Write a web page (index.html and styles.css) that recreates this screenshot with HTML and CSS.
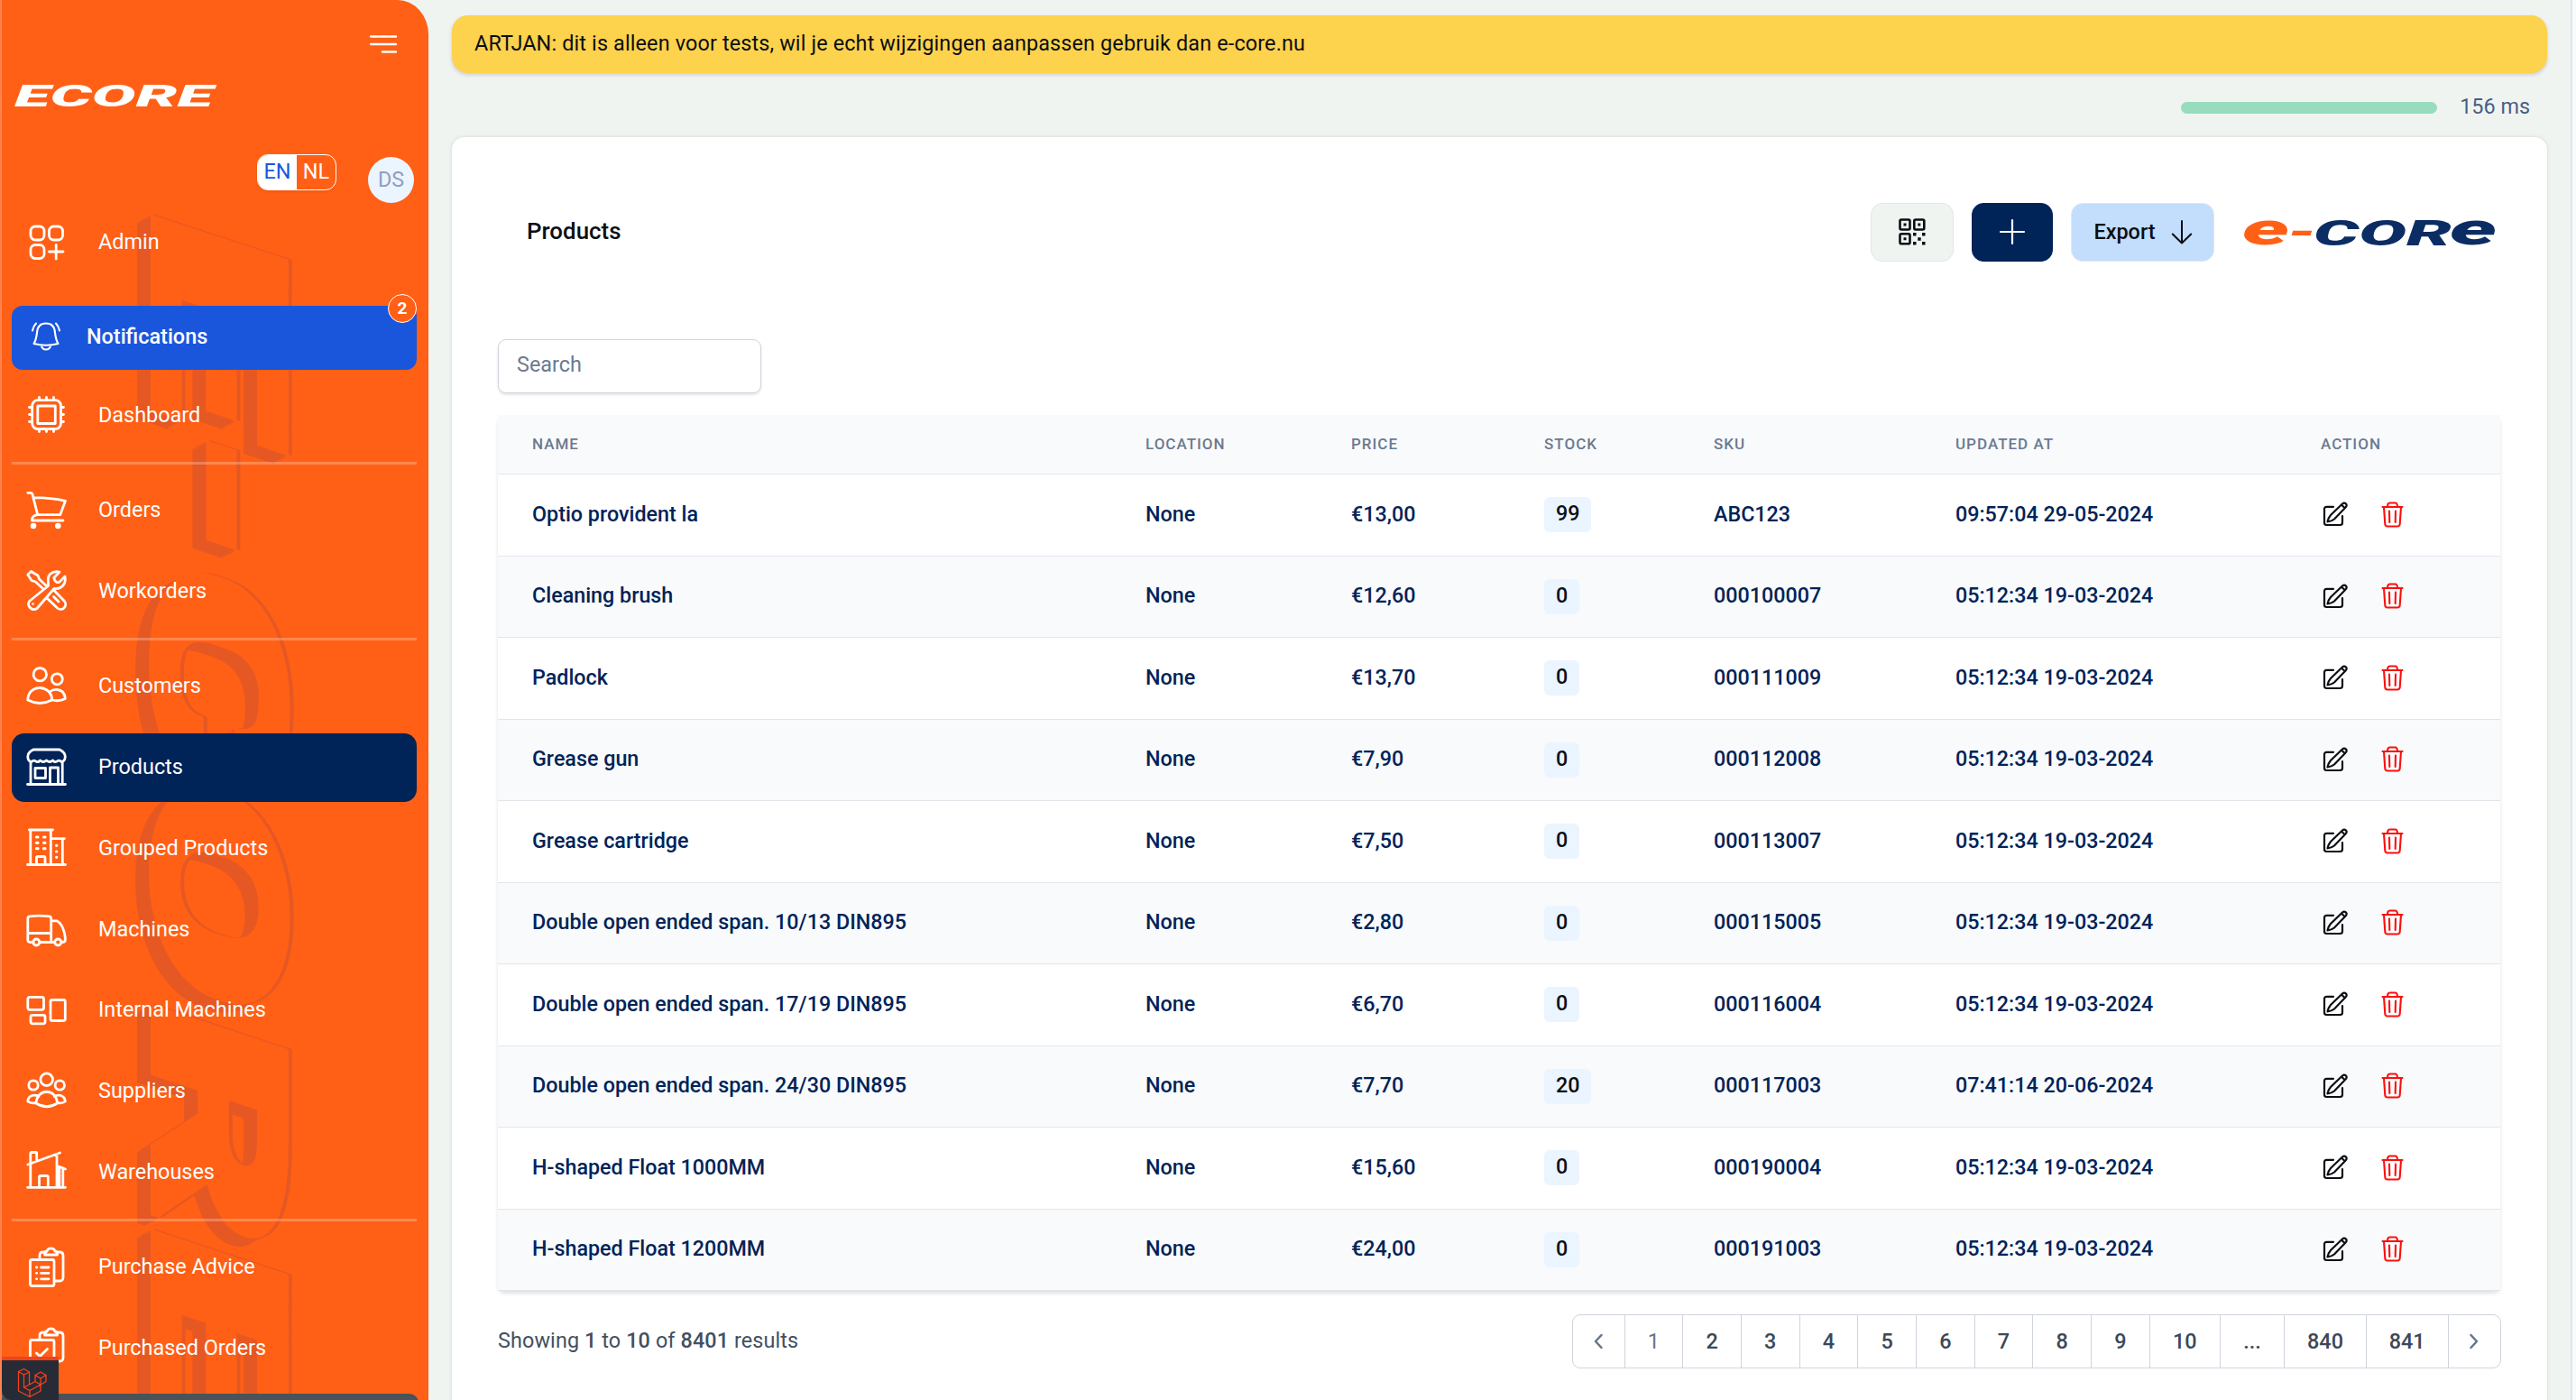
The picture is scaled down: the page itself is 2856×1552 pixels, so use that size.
FILE: index.html
```html
<!DOCTYPE html>
<html lang="en">
<head>
    <meta charset="UTF-8">
    <meta name="viewport" content="width=device-width, initial-scale=1.0">
    <title>Products</title>
    <link rel="stylesheet" href="styles.css">
</head>
<body>

<!-- Shared icons -->
<svg class="sprite" width="0" height="0">
    <symbol id="icon-edit" viewBox="0 0 28 28">
        <path d="M12 5.8H4.5Q2 5.8 2 8.300V23.500Q2 26 4.500 26H19.500Q22 26 22 23.500V16"/>
        <path d="M5.500 22.500Q6 18.500 9 15L22 2.500Q24 .8 26 2.500Q27.500 4.500 25.500 6.500L13 19.500Q10 22 5.500 22.500ZM21 3.500L24.500 7"/>
    </symbol>
    <symbol id="icon-trash" viewBox="0 0 25 29">
        <path d="M1.500 6H23.500M7 6Q7 1.500 9.500 1.500H15.500Q18 1.500 18 6M3 6L4.300 25Q4.500 27.500 7 27.500H18Q20.500 27.500 20.700 25L22 6M9 10.500L9.300 23M16 10.500L15.700 23"/>
    </symbol>
</svg>

<div class="page">
    <aside class="sidebar">
        <svg class="watermark" width="475" height="1600" viewBox="0 0 475 1600">
            <defs>
                <g id="mark">
                    <text transform="matrix(0 1 -1 -.33 173 236)" x="-10" textLength="228" lengthAdjust="spacingAndGlyphs">E</text>
                    <text transform="matrix(0 1 -1 -.33 185 465)" textLength="130" lengthAdjust="spacingAndGlyphs">-</text>
                    <text transform="matrix(0 1 -1 -.33 173 618)" x="-6" textLength="242" lengthAdjust="spacingAndGlyphs">C</text>
                    <text transform="matrix(0 1 -1 -.33 173 854)" x="-6" textLength="242" lengthAdjust="spacingAndGlyphs">O</text>
                    <text transform="matrix(0 1 -1 -.33 173 1112)" x="-10" textLength="244" lengthAdjust="spacingAndGlyphs">R</text>
                    <text transform="matrix(0 1 -1 -.33 173 1361)" x="-10" textLength="228" lengthAdjust="spacingAndGlyphs">E</text>
                </g>
            </defs>
            <g class="mark-side">
                <use href="#mark" x="4"/>
                <use href="#mark" x="-3" y="2"/>
                <use href="#mark" x="-6" y="4"/>
                <use href="#mark" x="-9" y="5"/>
                <use href="#mark" x="-12" y="7"/>
                <use href="#mark" x="-15" y="9"/>
            </g>
            <use class="mark-face" href="#mark"/>
        </svg>

        <div class="menu-toggle">
            <svg width="30" height="20" viewBox="0 0 30 20"><path d="M1 1.500H29M1 10H29M14 18.500H29"/></svg>
        </div>
        <svg class="brand" width="224" height="28" viewBox="0 0 224 28">
            <text x="0" y="25" textLength="220" lengthAdjust="spacingAndGlyphs">ECORE</text>
        </svg>
        <div class="user-bar">
            <div class="lang"><span class="active">EN</span><span>NL</span></div>
            <div class="avatar">DS</div>
        </div>

        <nav class="nav">
            <a class="nav-item">
                <svg viewBox="0 0 45 45"><rect x="5" y="5" width="15" height="15" rx="5"/><rect x="25.500" y="5" width="15" height="15" rx="5"/><rect x="5" y="25.500" width="15" height="15" rx="5"/><path d="M25.500 33H41M33.200 25.500V41"/></svg>
                Admin
            </a>
            <a class="nav-item notifications">
                <svg viewBox="0 0 34 36"><path d="M3.500 26Q6 22 7 14Q7.500 3.500 17 3.500Q26.500 3.500 27 14Q28 22 30.500 26Q17 29.500 3.500 26ZM12 28.500Q13 32.500 17 32.500Q21 32.500 22 28.500M2 11.500Q3 6.500 6 3.500M32 11.500Q31 6.500 28 3.500"/></svg>
                Notifications
                <span class="count">2</span>
            </a>
            <a class="nav-item">
                <svg viewBox="0 0 45 45"><rect x="6.700" y="6.700" width="31.800" height="31.800" rx="6"/><rect x="12.800" y="13" width="19.500" height="19.500"/><path d="M14.500 3.500V6M22.500 3.500V6M30.500 3.500V6M14.500 39V41.500M22.500 39V41.500M30.500 39V41.500M3.500 14.500H6M3.500 22.500H6M3.500 30.500H6M39 14.500H41.500M39 22.500H41.500M39 30.500H41.500"/></svg>
                Dashboard
            </a>
            <hr>
            <a class="nav-item">
                <svg viewBox="0 0 45 45"><path d="M1.800 3.300H5.200Q6.500 3.300 7 5L12.700 27.700H37.700L43.500 12.300Q28 8.700 8.500 8.700M12.700 27.700Q6.500 28.500 6.300 34H41"/><circle class="fill" cx="8" cy="40" r="3.300"/><circle class="fill" cx="35.300" cy="40" r="3.300"/></svg>
                Orders
            </a>
            <a class="nav-item">
                <svg viewBox="0 0 45 45"><path d="M22.500 17.500L14.500 10L13 6L5.500 1.500L1.800 5L6 11.500L10.500 13L18.500 20.500M24.500 17.500L3.500 34.500A6 6 0 0 0 12 42.500L31 20.500Q39 21.500 42.500 14.500Q44 11 43 7L36.500 13.500Q32 14.500 30.800 8.500L37 2Q31 .5 26.500 4.500Q23.500 8 24.500 14ZM22.500 30.500L34.500 42A5.500 5.500 0 0 0 42.500 34.500L30.500 22M30.500 29.500L36 35"/><circle class="fill" cx="7.500" cy="37.500" r="1.200"/></svg>
                Workorders
            </a>
            <hr>
            <a class="nav-item">
                <svg viewBox="0 0 45 45"><circle cx="15.300" cy="9.700" r="7.200"/><circle cx="34.300" cy="14.800" r="6"/><path d="M1.800 38C2 20 28 20 28.700 38Q15 45 1.800 38ZM26 29Q30 26 34.300 26.500Q42.500 27 43.300 36.500Q37 40 28.500 38"/></svg>
                Customers
            </a>
            <a class="nav-item active">
                <svg viewBox="0 0 45 45"><path d="M8 3H37Q43.300 6 43.300 11Q43 16 39 16.500Q37 14.500 35 15.500Q32 18 29.500 15Q26 18 22.500 15Q19 18 15.500 15Q13 18 10 15.500Q8 14.500 6 16.500Q2 16 1.800 11Q1.700 6 8 3ZM5 17V41.500M40.200 17V41.500M1.500 41.500H43.500M10 23.500H21.500V34.500H10ZM26.500 41V23H35.500V41"/></svg>
                Products
            </a>
            <a class="nav-item">
                <svg viewBox="0 0 45 45"><path d="M3.500 3H29.500M4.800 3V41.500M27.300 3V41.500M1.500 41.500H43.500M28 12.700H42.500M40.300 13V41.500M11.500 41V34Q11.500 32.500 13 32.500H19.500Q21 32.500 21 34V41"/><path class="dots" d="M11.500 11H13M19.500 11H21M11.500 17.300H13M19.500 17.300H21M11.500 23.700H13M19.500 23.700H21M33.600 20.300H33.800M33.600 27H33.800M33.600 33.300H33.800"/></svg>
                Grouped Products
            </a>
            <a class="nav-item">
                <svg viewBox="0 0 45 45"><path d="M8 37.500H4Q1.800 37.500 1.800 35V11.500Q1.800 9 4 8.800Q14 7.500 25.500 8.800Q27.700 9 27.700 11.500V37.500H15M2 27.500H27.500M28 13.800H34Q41 17 43.300 32V35.500Q43 37.500 39.500 37.500M27.700 37.500H31.500"/><circle cx="11.300" cy="37.500" r="3.500"/><circle cx="35.300" cy="37.500" r="3.500"/></svg>
                Machines
            </a>
            <a class="nav-item">
                <svg viewBox="0 0 45 45"><rect x="1.800" y="8.300" width="17.700" height="14" rx="2"/><rect x="5" y="28.300" width="16" height="9.500" rx="2"/><rect x="27" y="11.500" width="16.300" height="23" rx="2"/></svg>
                Internal Machines
            </a>
            <a class="nav-item">
                <svg viewBox="0 0 45 45"><circle cx="22.700" cy="10.700" r="6.800"/><circle cx="8" cy="17" r="5.200"/><circle cx="37.300" cy="17" r="5.200"/><path d="M11 37C12 20 33.500 20 34.500 37Q22.700 44.500 11 37ZM14 29.500Q10 27.500 6.500 28.500Q2 30 1.800 35Q5 37.500 11 36.500M31.300 29.500Q35 27.500 38.500 28.500Q43 30 43.300 35Q40 37.500 34.500 36.500"/></svg>
                Suppliers
            </a>
            <a class="nav-item">
                <svg viewBox="0 0 45 45"><path d="M1.800 15L37.500 2M4.800 14V2.500Q4.800 1.500 6 1.500H10.500Q11.700 1.500 11.700 2.500V11M4.800 14V40.300M1.500 40.300H43.500M34 3.500V40M14.500 40V29Q14.500 27.500 16 27.500H22.800Q24.300 27.500 24.300 29V40M34.300 16.500L43.500 20M36.800 18V40M40.800 19V40"/></svg>
                Warehouses
            </a>
            <hr>
            <a class="nav-item">
                <svg viewBox="0 0 45 45"><rect x="4.500" y="14.500" width="26.500" height="29" rx="2"/><path d="M15 14V10Q15 6 19 6H22M34 6H37Q41 6 41 10V34Q41 38 37 38H32M20.500 9Q20 5.500 23 5Q24 1.800 27.500 1.800Q31 1.800 32 5Q35 5.500 34.500 9ZM16.500 23H25M16.500 29.300H25M16.500 35.800H25M11.500 23H11.700M11.500 29.300H11.700M11.500 35.800H11.700"/></svg>
                Purchase Advice
            </a>
            <a class="nav-item">
                <svg viewBox="0 0 45 45"><rect x="4.500" y="14.500" width="26.500" height="29" rx="2"/><path d="M15 14V10Q15 6 19 6H22M34 6H37Q41 6 41 10V34Q41 38 37 38H32M20.500 9Q20 5.500 23 5Q24 1.800 27.500 1.800Q31 1.800 32 5Q35 5.500 34.500 9ZM11.500 29L15.300 32.500L23.500 24.500"/></svg>
                Purchased Orders
            </a>
        </nav>

        <div class="status-bar"></div>
        <div class="debug-toggle">
            <svg width="34" height="34" viewBox="0 0 34 34"><path d="M1.500 4.500L7.500 1.500L13.500 5V19L20 15.500V8.500L26 5L32 8.500V15.500L26 19V26L14 32.500L1.500 26ZM1.500 4.500L7.500 8L13.500 5M7.500 8V22L14 25.500L26 19L20 15.500L7.500 22M14 25.500V32.500M20 8.500L26 12L32 8.500M26 12V19"/></svg>
        </div>
    </aside>

    <main class="content">
        <div class="banner">ARTJAN: dit is alleen voor tests, wil je echt wijzigingen aanpassen gebruik dan e-core.nu</div>
        <div class="timing">
            <div class="timing-bar"></div>
            <span>156 ms</span>
        </div>

        <section class="card">
            <div class="card-header">
                <h1>Products</h1>
                <div class="actions">
                    <button class="btn btn-qr">
                        <svg width="30" height="30" viewBox="0 0 30 30"><rect x="1.500" y="1.500" width="11" height="11" rx="1.500"/><rect x="17.300" y="1.500" width="11" height="11" rx="1.500"/><rect x="1.500" y="17.300" width="11" height="11" rx="1.500"/><path class="dot" d="M5.500 5.500h3v3h-3zM21.300 5.500h3v3h-3zM5.500 21.300h3v3h-3zM16 16h3.500v3.500H16zM26 16h3.500v3.500H26zM21.200 21.200h3.500v3.500h-3.500zM16 26h3.500v3.500H16zM26 26h3.500v3.500H26z"/></svg>
                    </button>
                    <button class="btn btn-add">
                        <svg width="28" height="28" viewBox="0 0 28 28"><path d="M14 1V27M1 14H27"/></svg>
                    </button>
                    <button class="btn btn-export">
                        Export
                        <svg width="22" height="27" viewBox="0 0 22 27"><path d="M11 1V25.500M.8 15.500L11 25.500L21.200 15.500"/></svg>
                    </button>
                    <svg class="logo" width="286" height="50" viewBox="0 -10 286 50">
                        <text class="logo-e" x="-1" y="29" textLength="52" lengthAdjust="spacingAndGlyphs">e</text>
                        <text class="logo-dash" x="49" y="29" textLength="32" lengthAdjust="spacingAndGlyphs">-</text>
                        <text class="logo-core" x="78" y="30" textLength="153" lengthAdjust="spacingAndGlyphs">COR</text>
                        <text class="logo-core small" x="229" y="29" textLength="52" lengthAdjust="spacingAndGlyphs">e</text>
                    </svg>
                </div>
            </div>

            <input class="search" type="text" placeholder="Search">

            <table class="products">
                <colgroup>
                    <col style="width: 680px"><col style="width: 228px"><col style="width: 214px"><col style="width: 188px"><col style="width: 268px"><col style="width: 405px"><col>
                </colgroup>
                <thead>
                    <tr><th>Name</th><th>Location</th><th>Price</th><th>Stock</th><th>SKU</th><th>Updated at</th><th>Action</th></tr>
                </thead>
                <tbody id="product-rows"></tbody>
            </table>

            <div class="table-footer">
                <p>Showing <b>1</b> to <b>10</b> of <b>8401</b> results</p>
                <div class="pagination">
                    <span class="arrow"><svg width="12" height="18" viewBox="0 0 12 18"><path d="M9.500 2L3 9L9.500 16"/></svg></span>
                    <span class="current">1</span>
                    <span>2</span>
                    <span>3</span>
                    <span>4</span>
                    <span>5</span>
                    <span>6</span>
                    <span>7</span>
                    <span>8</span>
                    <span>9</span>
                    <span class="ten">10</span>
                    <span class="dots">...</span>
                    <span class="wide">840</span>
                    <span class="wide">841</span>
                    <span class="arrow"><svg width="12" height="18" viewBox="0 0 12 18"><path d="M2.500 2L9 9L2.500 16"/></svg></span>
                </div>
            </div>
        </section>
    </main>
    <div class="page-edge"></div>
</div>

<script src="script.js"></script>
</body>
</html>
```

FILE: script.js
```js
const products = [
    ['Optio provident la', '€13,00', 99, 'ABC123', '09:57:04 29-05-2024'],
    ['Cleaning brush', '€12,60', 0, '000100007', '05:12:34 19-03-2024'],
    ['Padlock', '€13,70', 0, '000111009', '05:12:34 19-03-2024'],
    ['Grease gun', '€7,90', 0, '000112008', '05:12:34 19-03-2024'],
    ['Grease cartridge', '€7,50', 0, '000113007', '05:12:34 19-03-2024'],
    ['Double open ended span. 10/13 DIN895', '€2,80', 0, '000115005', '05:12:34 19-03-2024'],
    ['Double open ended span. 17/19 DIN895', '€6,70', 0, '000116004', '05:12:34 19-03-2024'],
    ['Double open ended span. 24/30 DIN895', '€7,70', 20, '000117003', '07:41:14 20-06-2024'],
    ['H-shaped Float 1000MM', '€15,60', 0, '000190004', '05:12:34 19-03-2024'],
    ['H-shaped Float 1200MM', '€24,00', 0, '000191003', '05:12:34 19-03-2024']
];

document.getElementById('product-rows').innerHTML = products.map(([name, price, stock, sku, updated]) => `
    <tr>
        <td>${name}</td>
        <td>None</td>
        <td>${price}</td>
        <td><span class="stock">${stock}</span></td>
        <td>${sku}</td>
        <td>${updated}</td>
        <td>
            <div class="row-actions">
                <svg class="edit" width="28" height="28"><use href="#icon-edit"/></svg>
                <svg class="trash" width="25" height="29"><use href="#icon-trash"/></svg>
            </div>
        </td>
    </tr>`).join('');
```

FILE: styles.css
```css
* {
    box-sizing: border-box;
}

body {
    margin: 0;
    font-family: Roboto, "Liberation Sans", sans-serif;
    font-size: 23.4px;
    background-color: #f0f4f1;
    overflow: hidden;
}

svg {
    fill: none;
    stroke: currentColor;
    stroke-linecap: round;
    stroke-linejoin: round;
    flex-shrink: 0;
    overflow: visible;
}

svg text {
    stroke: none;
}

.sprite {
    position: absolute;
}

.page {
    display: flex;
    height: 1552px;
}

/* Sidebar */
.sidebar {
    position: relative;
    width: 475px;
    height: 1552px;
    flex-shrink: 0;
    padding: 39px 13px 0 11px;
    border-left: 2px solid #ff8450;
    border-top-right-radius: 34px 38px;
    background-color: #ff6016;
    color: #fff;
    overflow: hidden;
}

.watermark {
    position: absolute;
    top: 0;
    left: -2px;
}

.watermark text {
    font-family: Roboto, "Liberation Sans", sans-serif;
    font-size: 198px;
    font-weight: 700;
    stroke: inherit;
    stroke-width: 12px;
    stroke-linejoin: miter;
}

.mark-side {
    fill: #e55823;
    stroke: #e55823;
}

.mark-face {
    fill: #ff6016;
    stroke: #ff6016;
}

.menu-toggle {
    display: flex;
    justify-content: flex-end;
    height: 20px;
    padding-right: 22px;
}

.menu-toggle svg {
    stroke-width: 2.5;
}

.brand {
    display: block;
    margin: 34px 0 0 3px;
}

.brand text {
    fill: #fff;
    font: italic 900 33.5px Roboto, sans-serif;
}

.user-bar {
    display: flex;
    justify-content: flex-end;
    gap: 35px;
    margin-top: 50px;
    padding-right: 3px;
    height: 59.5px;
}

.lang {
    display: flex;
    width: 88px;
    height: 40px;
    border: 1px solid #fff;
    border-radius: 12px;
    overflow: hidden;
    line-height: 37px;
    box-shadow: 0 2px 3px rgba(0, 0, 0, 0.06);
}

.lang span {
    flex: 1;
    text-align: center;
}

.lang .active {
    background-color: #fff;
    color: #1a56db;
}

.avatar {
    width: 51px;
    height: 51px;
    margin-top: 3px;
    border-radius: 50%;
    background-color: #ebf5ff;
    color: #8f9fbc;
    line-height: 51px;
    text-align: center;
}

.nav {
    position: relative;
}

.nav-item {
    display: flex;
    align-items: center;
    gap: 35px;
    height: 76px;
    margin-bottom: 13.7px;
    padding: 0 0 1px 16px;
    border-radius: 14px;
}

.nav-item svg {
    width: 45px;
    height: 45px;
    stroke-width: 2.8;
}

.nav-item .fill {
    fill: currentColor;
    stroke: none;
}

.nav-item .dots {
    stroke-width: 3.2;
}

.nav-item.active {
    background-color: #002358;
}

.nav-item.notifications {
    position: relative;
    height: 71px;
    margin: 32px 0 12.800px;
    padding-left: 21px;
    padding-bottom: 2px;
    gap: 28px;
    border-radius: 12px;
    background-color: #1a56db;
    font-weight: 500;
}

.notifications svg {
    width: 34px;
    height: 36px;
    stroke-width: 2.1;
}

.count {
    position: absolute;
    top: -13px;
    right: 0;
    width: 32px;
    height: 32px;
    border: 1.5px solid #fff;
    border-radius: 50%;
    background-color: #ff6016;
    font-size: 19px;
    font-weight: 700;
    line-height: 30px;
    text-align: center;
}

.nav hr {
    height: 3px;
    margin: 0 0 12.800px;
    border: none;
    background-color: rgba(255, 255, 255, 0.25);
}

.status-bar {
    position: absolute;
    left: -2px;
    top: 1545px;
    width: 464px;
    height: 20px;
    border-radius: 12px;
    background-color: #4b5258;
}

.debug-toggle {
    position: absolute;
    left: -2px;
    top: 1504px;
    width: 65px;
    height: 48px;
    padding: 11px 0 0 17px;
    border-top: 4px solid #f0431c;
    border-left: 2px solid #4b5258;
    border-bottom-left-radius: 12px;
    background-color: #272b35;
    color: #f4401c;
}

.debug-toggle svg {
    display: block;
    margin-top: -3px;
    stroke-width: 1.3;
}

/* Main content */
.content {
    flex: 1;
    padding: 17px 26px 0;
}

.banner {
    height: 64px;
    padding-left: 25px;
    border-radius: 18px;
    background-color: #fdd24c;
    color: #0b0f14;
    line-height: 63px;
    letter-spacing: 0.14px;
    box-shadow: 0 2px 4px rgba(60, 40, 110, 0.2);
}

.timing {
    display: flex;
    align-items: center;
    justify-content: flex-end;
    gap: 25px;
    height: 71px;
    padding-right: 19px;
    color: #475f86;
}

.timing span {
    margin-top: 3px;
}

.timing-bar {
    width: 284px;
    height: 13px;
    margin-top: 5px;
    border-radius: 7px;
    background-color: #96dcbd;
}

.card {
    height: 1420px;
    padding: 72.500px 51px 0;
    border-radius: 14px;
    background-color: #fff;
    box-shadow: 0 0 4px rgba(0, 0, 0, 0.12);
}

.card-header {
    display: flex;
    align-items: center;
    justify-content: space-between;
    height: 65px;
    padding-left: 32px;
}

.card-header h1 {
    margin: 0;
    padding-bottom: 3px;
    font-size: 25.9px;
    font-weight: 500;
    color: #0b0f14;
}

.actions {
    display: flex;
    align-items: center;
    gap: 20px;
}

.btn {
    display: flex;
    align-items: center;
    justify-content: center;
    height: 65px;
    padding: 0;
    border: 1px solid #e2e6e9;
    border-radius: 13px;
    font: 500 23.4px Roboto, sans-serif;
    color: #0b0f14;
}

.btn-qr {
    width: 92px;
    background-color: #f0f4f1;
}

.btn-qr svg {
    stroke-width: 2.6;
}

.btn-qr .dot {
    fill: currentColor;
    stroke: none;
}

.btn-add {
    width: 90px;
    border-color: #002358;
    background-color: #002358;
    color: #fff;
}

.btn-add svg {
    stroke-width: 2.2;
}

.btn-export {
    width: 159px;
    gap: 18px;
    background-color: #c3ddfd;
}

.btn-export svg {
    stroke-width: 2;
}

.logo {
    margin-left: 12px;
}

.logo text {
    font-family: Roboto, sans-serif;
    font-style: italic;
    font-weight: 900;
}

.logo .logo-e,
.logo .logo-dash {
    fill: #ff6016;
    font-size: 50px;
}

.logo .logo-dash {
    font-size: 40px;
}

.logo .logo-core {
    fill: #0b2d64;
    font-size: 38.5px;
}

.logo .small {
    font-size: 50px;
}

.search {
    display: block;
    width: 292px;
    height: 60px;
    margin-top: 86.500px;
    padding: 0 19px 4px 20px;
    border: 1px solid #cfd4dc;
    border-radius: 9px;
    font: 23.4px Roboto, sans-serif;
    box-shadow: 0 2px 3px rgba(0, 0, 0, 0.1);
}

.search::placeholder {
    color: #6b7a90;
}

.products {
    width: 2220px;
    margin-top: 24px;
    table-layout: fixed;
    border-collapse: separate;
    border-spacing: 0;
    border-radius: 8px;
    box-shadow: 0 3px 4px rgba(0, 0, 0, 0.12);
}

.products th,
.products td {
    padding: 0 0 0 38px;
    text-align: left;
}

.products th {
    height: 66px;
    padding-bottom: 1px;
    border-bottom: 1px solid #e2e6ea;
    background-color: #f9fafc;
    color: #6b7a90;
    font-size: 17px;
    font-weight: 500;
    letter-spacing: 1px;
    text-transform: uppercase;
}

.products td {
    height: 90.5px;
    padding-bottom: 2px;
    border-bottom: 1px solid #e2e6ea;
    background-color: #fff;
    color: #002358;
    font-size: 23.3px;
    font-weight: 500;
}

.products tr:nth-child(even) td {
    background-color: #f9fafc;
}

.products .stock {
    display: inline-block;
    height: 39px;
    margin-top: 2px;
    padding: 0 13px;
    border-radius: 6px;
    background-color: #ebf5ff;
    color: #0b0f14;
    line-height: 37px;
    vertical-align: middle;
}

.row-actions {
    display: flex;
    align-items: center;
    padding: 1px 0 0 2px;
}

.edit {
    color: #0b0f14;
    stroke-width: 2.2;
}

.trash {
    margin-left: 37px;
    color: #fb0f0c;
    stroke-width: 2.1;
}

.table-footer {
    display: flex;
    align-items: center;
    justify-content: space-between;
    margin-top: 26px;
    color: #43505f;
}

.table-footer p {
    margin: 0;
    padding-bottom: 2px;
    letter-spacing: 0.1px;
}

.table-footer b {
    font-weight: 500;
}

.pagination {
    display: flex;
    width: 1030px;
    height: 60px;
    border: 1px solid #d0d4dc;
    border-radius: 9px;
    font-weight: 500;
    color: #3c4856;
}

.pagination span {
    display: flex;
    align-items: center;
    justify-content: center;
    width: 64.700px;
    padding-bottom: 1px;
    border-right: 1px solid #d0d4dc;
}

.pagination .arrow {
    width: 57.500px;
    color: #64748b;
}

.pagination .arrow svg {
    stroke-width: 2.500;
}

.pagination span:last-child {
    border-right: none;
}

.pagination .current {
    font-weight: 400;
    color: #64748b;
}

.pagination .ten {
    width: 78px;
}

.pagination .dots {
    width: 71.500px;
}

.pagination .wide {
    width: 90.700px;
}

.page-edge {
    width: 6px;
    border-left: 2px solid #e0e4e8;
    background-color: #f9fafc;
}
```
